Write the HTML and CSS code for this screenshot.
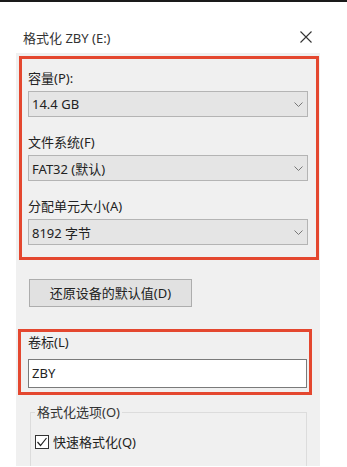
FILE: index.html
```html
<!DOCTYPE html>
<html>
  <head>
    <title>格式化 ZBY (E:)</title>
    <link rel="stylesheet" href="styles.css">
  </head>
  <body>
    <div class="dialog">
      <div class="titlebar">
        <span class="title">格式化 ZBY (E:)</span>
        <svg class="close" width="12" height="12" viewBox="0 0 12 12">
          <path d="M0.5 0.5 L11.5 11.5 M11.5 0.5 L0.5 11.5" stroke="#333" stroke-width="1.1" fill="none"/>
        </svg>
      </div>

      <div class="panel">
        <div class="marked settings">
          <div class="field">
            <div class="label">容量(P):</div>
            <div class="combo"><span>14.4 GB</span><svg width="9" height="5" viewBox="0 0 9 5"><polyline points="0.5,0.5 4.5,4.5 8.5,0.5" stroke="#777" fill="none"/></svg></div>
          </div>
          <div class="field">
            <div class="label">文件系统(F)</div>
            <div class="combo"><span>FAT32 (默认)</span><svg width="9" height="5" viewBox="0 0 9 5"><polyline points="0.5,0.5 4.5,4.5 8.5,0.5" stroke="#777" fill="none"/></svg></div>
          </div>
          <div class="field">
            <div class="label">分配单元大小(A)</div>
            <div class="combo"><span>8192 字节</span><svg width="9" height="5" viewBox="0 0 9 5"><polyline points="0.5,0.5 4.5,4.5 8.5,0.5" stroke="#777" fill="none"/></svg></div>
          </div>
        </div>

        <div class="button">还原设备的默认值(D)</div>

        <div class="marked volume">
          <div class="label">卷标(L)</div>
          <div class="textbox">ZBY</div>
        </div>

        <fieldset class="options">
          <legend>格式化选项(O)</legend>
          <div class="check-row">
            <span class="checkbox">
              <svg width="12" height="12" viewBox="0 0 12 12"><polyline points="1.5,6 4.5,9.5 10.5,2" stroke="#222" stroke-width="1.2" fill="none"/></svg>
            </span>
            <span>快速格式化(Q)</span>
          </div>
        </fieldset>
      </div>
    </div>
  </body>
</html>
```

FILE: styles.css
```css
body {
  margin: 0;
  border-top: 2px solid #1a1a1a;
  background-color: #fff;
  font-family: "Noto Sans", "Noto Sans CJK SC", sans-serif;
  font-size: 13px;
  color: #222;
}

.dialog {
  width: 304px;
  margin-left: 16px;
}

.titlebar {
  display: flex;
  justify-content: space-between;
  align-items: flex-start;
  height: 51px;
  padding: 26px 8px 0 7px;
  box-sizing: border-box;
  line-height: 20px;
  color: #333;
}

.close {
  margin-top: 3px;
}

.panel {
  background-color: #f0f0f0;
  padding: 3px 1px 0 3px;
}

.marked {
  border: 3px solid #e4472f;
}

.settings {
  padding: 9px 8px 12px 6px;
}

.field + .field {
  margin-top: 15px;
}

.label {
  line-height: 20px;
  margin-bottom: 3px;
}

.combo {
  display: flex;
  justify-content: space-between;
  align-items: center;
  height: 26px;
  padding: 0 4px 0 3px;
  box-sizing: border-box;
  background-color: #e5e5e5;
  border: 1px solid #b4b4b4;
}

.button {
  width: 163px;
  height: 28px;
  margin: 19px 0 0 10px;
  box-sizing: border-box;
  border: 1px solid #adadad;
  background-color: #e1e1e1;
  text-align: center;
  line-height: 26px;
}

.volume {
  width: 294px;
  box-sizing: border-box;
  margin: 22px 0 0 -1px;
  padding: 0 2px 4px 7px;
}

.volume .label {
  margin-bottom: 7px;
}

.textbox {
  height: 29px;
  box-sizing: border-box;
  border: 1px solid #7a7a7a;
  background-color: #fff;
  padding-left: 3px;
  line-height: 27px;
}

.options {
  width: 277px;
  box-sizing: border-box;
  margin: 7px 0 0 11px;
  padding: 10px 4px 14px 4px;
  border: 1px solid #dcdcdc;
  border-bottom: none;
  min-inline-size: 0;
}

.options legend {
  padding: 0 2px;
  line-height: 20px;
  color: #333;
}

.check-row {
  display: flex;
  align-items: center;
  gap: 4px;
  line-height: 20px;
}

.checkbox {
  display: flex;
  align-items: center;
  justify-content: center;
  width: 14px;
  height: 14px;
  box-sizing: border-box;
  border: 1px solid #333;
  background-color: #fff;
}
```
